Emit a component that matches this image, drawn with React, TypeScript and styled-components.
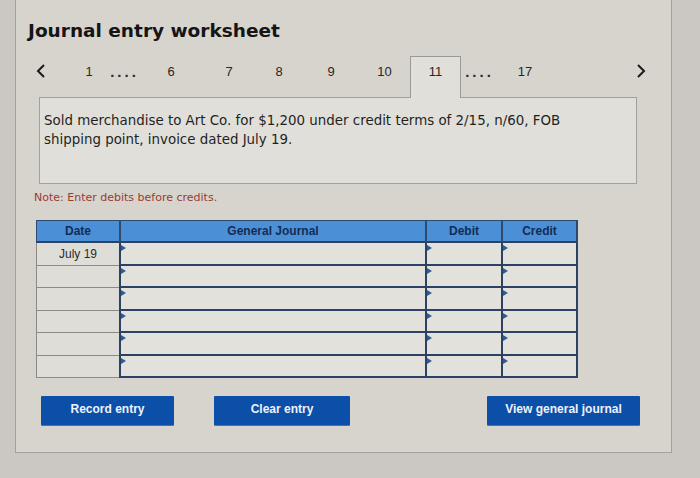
import React from 'react';
import styled, {createGlobalStyle} from 'styled-components';

const GlobalStyle = createGlobalStyle`
    html, body {
        margin: 0;
        padding: 0;
    }
    body {
        width: 700px;
        height: 478px;
        overflow: hidden;
        background: #cbc7c2;
        font-family: "DejaVu Sans", Verdana, sans-serif;
        color: #1c1c1c;
    }
`;

const Panel = styled.div`
    margin-left: 15px;
    width: 657px;
    height: 453px;
    box-sizing: border-box;
    border: 1px solid #a4a19c;
    border-top: none;
    background: #d7d4ce;
    padding: 19px 0 0 0;
`;

const Title = styled.h1`
    margin: 0 0 13px 12px;
    font-size: 18.5px;
    line-height: 24px;
    font-weight: bold;
    color: #151515;
`;

const TabRow = styled.div`
    display: flex;
    align-items: flex-start;
    height: 41px;
    margin-left: 15px;
    width: 620px;
    position: relative;
    z-index: 1;
`;

const Tab = styled.div<{$w: number; $active?: boolean; $gap?: number}>`
    width: ${({$w}) => $w}px;
    margin-left: ${({$gap}) => $gap || 0}px;
    height: ${({$active}) => ($active ? 42 : 32)}px;
    box-sizing: border-box;
    display: flex;
    justify-content: center;
    align-items: flex-start;
    padding-top: ${({$active}) => ($active ? 8 : 9)}px;
    font-family: "Liberation Sans", Arial, sans-serif;
    font-size: 13px;
    line-height: 14px;
    color: #262626;
    ${({$active}) =>
        $active &&
        `
        background: #e1dfda;
        border: 1px solid #9c9a95;
        border-bottom: none;
    `}
`;

const Dots = styled(Tab)`
    font-weight: bold;
    font-size: 15px;
    letter-spacing: 3px;
    padding-left: 3px;
    color: #2a2a2a;
`;

const Spacer = styled.div`
    flex: 1;
`;

const Arrow = styled.div<{$gap?: number}>`
    width: 20px;
    height: 32px;
    margin-left: ${({$gap}) => $gap || 0}px;
    display: flex;
    align-items: center;
    justify-content: center;
    padding-bottom: 2px;
    box-sizing: border-box;
`;

const QuestionBox = styled.div`
    margin-left: 23px;
    width: 598px;
    height: 87px;
    box-sizing: border-box;
    border: 1px solid #a3a19c;
    background: #e1dfda;
    padding: 13px 4px 0 4px;
    font-size: 13.4px;
    line-height: 19px;
    color: #1f1f1f;
`;

const Note = styled.div`
    margin: 7px 0 0 18px;
    font-size: 11px;
    line-height: 14px;
    color: #9a3b31;
`;

const Table = styled.div`
    margin: 15px 0 0 20px;
    width: 542px;
    display: grid;
    grid-template-columns: 83px 306px 76px 77px;
    grid-auto-rows: 22.5px;
    grid-template-rows: 23px;
`;

const HeadCell = styled.div<{$first?: boolean; $last?: boolean}>`
    background: #4b8fd7;
    border-top: 1px solid #2d4a6e;
    border-left: ${({$first}) => ($first ? 1 : 2)}px solid #2d4a6e;
    border-right: ${({$last}) => ($last ? '2px solid #2d4a6e' : 'none')};
    border-bottom: 2px solid #2b4262;
    display: flex;
    align-items: center;
    justify-content: center;
    font-family: "Liberation Sans", Arial, sans-serif;
    font-weight: bold;
    font-size: 12px;
    color: #142c54;
`;

const DateCell = styled.div`
    background: #dfddd8;
    border-left: 1px solid #8c8a86;
    border-bottom: 1px solid #8c8a86;
    display: flex;
    align-items: center;
    justify-content: center;
    font-family: "Liberation Sans", Arial, sans-serif;
    font-size: 12px;
    color: #2a2a2a;
`;

const InputCell = styled.div<{$last?: boolean}>`
    position: relative;
    background: #e3e1dc;
    border-left: 2px solid #2b4262;
    border-bottom: 2px solid #2b4262;
    border-right: ${({$last}) => ($last ? '2px solid #2b4262' : 'none')};
    &::before {
        content: '';
        position: absolute;
        top: 2px;
        left: 0;
        border-left: 5px solid #2b5b9c;
        border-top: 3px solid transparent;
        border-bottom: 3px solid transparent;
    }
`;

const ButtonRow = styled.div`
    display: flex;
    margin: 18px 0 0 25px;
    width: 599px;
`;

const Button = styled.button<{$w: number; $gap?: number}>`
    width: ${({$w}) => $w}px;
    height: 29px;
    margin-left: ${({$gap}) => $gap || 0}px;
    border: none;
    border-radius: 1px;
    background: #0c4fa9;
    color: #eef2f9;
    font-family: "Liberation Sans", Arial, sans-serif;
    font-weight: bold;
    font-size: 12px;
    padding: 0 0 3px 0;
    box-shadow: 0 1px 0 #5b6f8c;
`;

const Chevron = ({dir}: {dir: 'left' | 'right'}) => (
    <svg width="10" height="14" viewBox="0 0 10 14">
        <path
            d={dir === 'left' ? 'M8 1 L2 7 L8 13' : 'M2 1 L8 7 L2 13'}
            fill="none"
            stroke="#1a1a1a"
            strokeWidth="2"
        />
    </svg>
);

const rows = ['July 19', '', '', '', '', ''];

export default function App() {
    return (
        <>
            <GlobalStyle />
            <Panel>
                <Title>Journal entry worksheet</Title>
                <TabRow>
                    <Arrow>
                        <Chevron dir="left" />
                    </Arrow>
                    <Tab $w={36} $gap={20}>1</Tab>
                    <Dots $w={32}>....</Dots>
                    <Tab $w={64}>6</Tab>
                    <Tab $w={52}>7</Tab>
                    <Tab $w={48}>8</Tab>
                    <Tab $w={56}>9</Tab>
                    <Tab $w={51}>10</Tab>
                    <Tab $w={51} $active>11</Tab>
                    <Dots $w={34}>....</Dots>
                    <Tab $w={60}>17</Tab>
                    <Spacer />
                    <Arrow>
                        <Chevron dir="right" />
                    </Arrow>
                </TabRow>
                <QuestionBox>
                    Sold merchandise to Art Co. for $1,200 under credit terms of 2/15, n/60, FOB
                    <br />
                    shipping point, invoice dated July 19.
                </QuestionBox>
                <Note>Note: Enter debits before credits.</Note>
                <Table>
                    <HeadCell $first>Date</HeadCell>
                    <HeadCell>General Journal</HeadCell>
                    <HeadCell>Debit</HeadCell>
                    <HeadCell $last>Credit</HeadCell>
                    {rows.map((date, i) => (
                        <React.Fragment key={i}>
                            <DateCell>{date}</DateCell>
                            <InputCell />
                            <InputCell />
                            <InputCell $last />
                        </React.Fragment>
                    ))}
                </Table>
                <ButtonRow>
                    <Button $w={133}>Record entry</Button>
                    <Button $w={136} $gap={40}>Clear entry</Button>
                    <Spacer />
                    <Button $w={153}>View general journal</Button>
                </ButtonRow>
            </Panel>
        </>
    );
}
